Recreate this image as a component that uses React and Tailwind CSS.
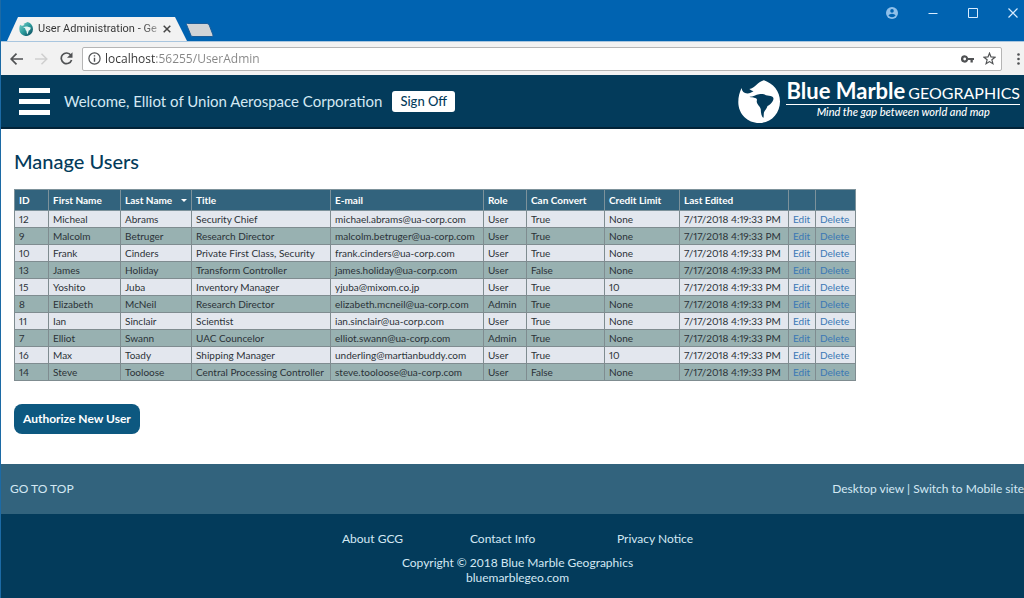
import { useState } from 'react';

const COLUMNS = [
  { label: 'ID', width: 'w-[34px]' },
  { label: 'First Name', width: 'w-[72px]' },
  { label: 'Last Name', width: 'w-[71px]', sorted: true },
  { label: 'Title', width: 'w-[139px]' },
  { label: 'E-mail', width: 'w-[153px]' },
  { label: 'Role', width: 'w-[43px]' },
  { label: 'Can Convert', width: 'w-[78px]' },
  { label: 'Credit Limit', width: 'w-[75px]' },
  { label: 'Last Edited', width: 'w-[109px]' },
  { label: '', width: 'w-[27px]' },
  { label: '', width: 'w-[40px]' },
];

const EDITED = '7/17/2018 4:19:33 PM';

const USERS = [
  [12, 'Micheal', 'Abrams', 'Security Chief', 'michael.abrams@ua-corp.com', 'User', 'True', 'None', EDITED],
  [9, 'Malcolm', 'Betruger', 'Research Director', 'malcolm.betruger@ua-corp.com', 'User', 'True', 'None', EDITED],
  [10, 'Frank', 'Cinders', 'Private First Class, Security', 'frank.cinders@ua-corp.com', 'User', 'True', 'None', EDITED],
  [13, 'James', 'Holiday', 'Transform Controller', 'james.holiday@ua-corp.com', 'User', 'False', 'None', EDITED],
  [15, 'Yoshito', 'Juba', 'Inventory Manager', 'yjuba@mixom.co.jp', 'User', 'True', '10', EDITED],
  [8, 'Elizabeth', 'McNeil', 'Research Director', 'elizabeth.mcneil@ua-corp.com', 'Admin', 'True', 'None', EDITED],
  [11, 'Ian', 'Sinclair', 'Scientist', 'ian.sinclair@ua-corp.com', 'User', 'True', 'None', EDITED],
  [7, 'Elliot', 'Swann', 'UAC Councelor', 'elliot.swann@ua-corp.com', 'Admin', 'True', 'None', EDITED],
  [16, 'Max', 'Toady', 'Shipping Manager', 'underling@martianbuddy.com', 'User', 'True', '10', EDITED],
  [14, 'Steve', 'Tooloose', 'Central Processing Controller', 'steve.tooloose@ua-corp.com', 'User', 'False', 'None', EDITED],
];

function Logo() {
  return (
    <svg viewBox="0 0 42 43" className="h-[43px] w-[42px]" aria-hidden="true">
      <path
        fill="#ffffff"
        d="M3.500 8C4 11.500 6 13.200 9.300 13.400C11.500 13.500 13.500 12.500 15.500 11.200C13.500 10.500 12.300 9.800 11.300 9C17 8.200 20 1.500 26 0.300C35 3.500 42 11 42 21.500C42 33.500 33 43 21.200 43C9.500 43 0.300 34 0.300 22C0.300 17 1.500 12.500 3.500 8Z"
      />
      <path
        fill="#033b5b"
        d="M11.500 16.800C15 16.500 18 14.800 21 14.200C24 13.800 26 14 28 15.200C30 15.700 32 15.600 34 16.600C36 17.800 35.800 19.500 34.500 21.500C33 24 31.500 25 29.500 26C28.500 29 27 30 26 32.200C25.500 34 26 36.500 25.300 38C23.500 36.500 22.800 33 22.800 29.500C22.500 26.500 19 25 18.700 21.500C19 19.500 19.500 18.500 17 17.900C15 17.500 13 17.500 11.500 16.800Z"
      />
    </svg>
  );
}

function Favicon() {
  return (
    <svg viewBox="0 0 14 14" className="size-3.5 shrink-0" aria-hidden="true">
      <defs>
        <linearGradient id="marble" x1="0" y1="0" x2="1" y2="1">
          <stop offset="0" stopColor="#7fd6cf" />
          <stop offset="0.5" stopColor="#2a9a9b" />
          <stop offset="1" stopColor="#0a4258" />
        </linearGradient>
      </defs>
      <path d="M1.200 2.800C2.500 4.400 4.200 4 5.600 2.600L4.300 2C6 1.700 7 0.500 8.700 0.100C12 1.200 14 4 14 7.200A6.800 6.800 0 0 1 0.300 7.200C0.300 5.500 0.500 4 1.200 2.800Z" fill="url(#marble)" />
      <path d="M4 5.300C6 5 7.200 4.300 9 4.700L11.600 5.400C12 6.800 10.800 8 9.800 8.600L8.600 12.200C7.600 11.300 7.600 9.800 7.500 9C6.200 8 6.400 6.300 5.900 5.900Z" fill="#e4f5f4" />
    </svg>
  );
}

function TitleBar() {
  return (
    <div className="flex h-[42px] items-end justify-between border-b border-[#a9c6df] bg-[#0063b1] pl-1.5">
      <div className="flex items-end">
        <div className="flex h-6 w-[180px] items-center bg-[#f2f2f2] pr-4 pl-3 [clip-path:polygon(0_100%,11px_0,168px_0,100%_100%)]">
          <Favicon />
          <span className="ml-[5px] flex-1 bg-linear-to-r from-[#333] from-85% to-[#bbb] bg-clip-text font-[Roboto,sans-serif] text-[11px] leading-4 whitespace-nowrap text-transparent">
            User Administration - Ge
          </span>
          <button type="button" aria-label="Close tab" className="ml-[3px] shrink-0 text-[#444]">
            <svg viewBox="0 0 8 8" className="size-2" fill="none" stroke="currentColor" strokeWidth="1.5">
              <path d="M0.700 0.700L7.300 7.300M7.300 0.700L0.700 7.300" />
            </svg>
          </button>
        </div>
        <button type="button" aria-label="New tab" className="mb-[3px] -ml-0.5">
          <svg viewBox="0 0 30 15" className="h-[15px] w-[30px]">
            <path d="M1.500 1.500Q1 0.500 2.500 0.500H22Q23.500 0.500 24.200 2L28 12Q28.500 13.500 27 13.500H8Q6.500 13.500 6 12.500Z" fill="#d0d3d6" stroke="#1b5c98" strokeWidth="1" />
          </svg>
        </button>
      </div>
      <div className="flex items-center gap-[30px] self-start pt-[7px] pr-1.5 text-[#d8ecff]">
        <button type="button" aria-label="Profile">
          <svg viewBox="0 0 12 12" className="size-3">
            <circle cx="6" cy="6" r="6" fill="#8fc0ea" />
            <circle cx="6" cy="3.900" r="1.800" fill="#0063b1" />
            <path d="M2.400 8.200Q3.700 6.700 6 6.700T9.600 8.200Q8.400 10.200 6 10.200T2.400 8.200Z" fill="#0063b1" />
          </svg>
        </button>
        <button type="button" aria-label="Minimize">
          <svg viewBox="0 0 10 10" className="size-2.5" fill="none" stroke="currentColor">
            <path d="M0.500 5.500H9.500" />
          </svg>
        </button>
        <button type="button" aria-label="Maximize">
          <svg viewBox="0 0 10 10" className="size-2.5" fill="none" stroke="currentColor">
            <path d="M0.500 0.500H9.500V9.500H0.500Z" />
          </svg>
        </button>
        <button type="button" aria-label="Close">
          <svg viewBox="0 0 10 10" className="size-2.5" fill="none" stroke="currentColor" strokeWidth="1.200">
            <path d="M0.500 0.500L9.500 9.500M9.500 0.500L0.500 9.500" />
          </svg>
        </button>
      </div>
    </div>
  );
}

function Toolbar() {
  const [url, setUrl] = useState('localhost:56255/UserAdmin');

  return (
    <div className="flex h-[33px] items-center bg-[#f2f2f2] pl-[9px] text-[#505254]">
      <button type="button" aria-label="Back">
        <svg viewBox="0 0 13 12" className="h-3 w-[13px]" fill="none" stroke="currentColor" strokeWidth="1.700">
          <path d="M13 6H1.500M6.500 0.700L1.200 6L6.500 11.300" />
        </svg>
      </button>
      <button type="button" aria-label="Forward" className="ml-3 text-[#cfcfcf]">
        <svg viewBox="0 0 13 12" className="h-3 w-[13px]" fill="none" stroke="currentColor" strokeWidth="1.500">
          <path d="M0 6H11.500M6.500 0.700L11.800 6L6.500 11.300" />
        </svg>
      </button>
      <button type="button" aria-label="Reload" className="ml-3">
        <svg viewBox="0 0 13 13" className="size-[13px]" fill="none" stroke="currentColor" strokeWidth="1.700">
          <path d="M10.800 3.100A5.300 5.300 0 1 0 11.600 8" />
          <path d="M12.500 0.300V5.800H7Z" fill="currentColor" stroke="none" />
        </svg>
      </button>
      <div className="ml-[9px] flex h-6 min-w-0 flex-1 items-center rounded-xs border border-[#b5b5b5] bg-white px-[5px]">
        <button type="button" aria-label="View site information">
          <svg viewBox="0 0 13 13" className="size-[13px]" fill="none" stroke="currentColor" strokeWidth="1.200">
            <circle cx="6.500" cy="6.500" r="5.600" />
            <path d="M6.500 5.700V9.800M6.500 3.200V4.600" strokeWidth="1.400" />
          </svg>
        </button>
        <input
          type="text"
          aria-label="Address"
          value={url}
          onChange={(e) => setUrl(e.target.value)}
          className="ml-1 min-w-0 flex-1 bg-[linear-gradient(90deg,#333_50px,#858585_50px)] bg-clip-text font-['Open_Sans',sans-serif] text-[12px] leading-5 text-transparent caret-black outline-none"
        />
        <button type="button" aria-label="Saved password">
          <svg viewBox="0 0 13 8" className="h-2 w-[13px]">
            <path fillRule="evenodd" fill="currentColor" d="M3.700 0.300A3.700 3.700 0 1 0 7.200 5.100H9.500V7.400H11.800V5.100H13V2.900H7.200A3.700 3.700 0 0 0 3.700 0.300ZM3.700 2.600A1.400 1.400 0 1 1 3.700 5.400A1.400 1.400 0 1 1 3.700 2.600Z" />
          </svg>
        </button>
        <button type="button" aria-label="Bookmark" className="ml-[9px]">
          <svg viewBox="0 0 13 13" className="size-[13px]" fill="none" stroke="currentColor" strokeWidth="1.200">
            <path d="M6.500 1.200L8 4.900L12 5.200L8.900 7.800L9.900 11.700L6.500 9.600L3.100 11.700L4.100 7.800L1 5.200L5 4.900Z" />
          </svg>
        </button>
      </div>
      <button type="button" aria-label="Browser menu" className="mr-1 ml-[15px]">
        <svg viewBox="0 0 3 12" className="h-3 w-[3px]" fill="currentColor">
          <circle cx="1.500" cy="1.500" r="1.300" />
          <circle cx="1.500" cy="6" r="1.300" />
          <circle cx="1.500" cy="10.500" r="1.300" />
        </svg>
      </button>
    </div>
  );
}

function SiteHeader() {
  return (
    <header className="flex h-[54px] items-center border-b-2 border-[#022338] bg-[#033b5b] pr-1 pl-[18px]">
      <button type="button" aria-label="Menu" className="flex w-[31px] flex-col gap-[6px]">
        <span className="h-[5px] w-full bg-white" />
        <span className="h-[5px] w-full bg-white" />
        <span className="h-[5px] w-full bg-white" />
      </button>
      <p className="ml-[14px] text-[15px] whitespace-nowrap text-[#d3e8f3]">Welcome, Elliot of Union Aerospace Corporation</p>
      <button type="button" className="ml-2.5 h-[21px] rounded-[3px] bg-white px-2 text-[13px] leading-5 font-medium whitespace-nowrap text-[#033b5b]">
        Sign Off
      </button>
      <a href="#home" className="ml-auto flex items-center text-white">
        <Logo />
        <span className="ml-[6px] flex flex-col pb-1">
          <span className="flex items-baseline gap-[3px] border-b border-white leading-[22px]">
            <span className="text-[22px] font-bold whitespace-nowrap">Blue Marble</span>
            <span className="text-[16px]">GEOGRAPHICS</span>
          </span>
          <span className="text-center text-[11px] leading-[14px] font-medium whitespace-nowrap italic">Mind the gap between world and map</span>
        </span>
      </a>
    </header>
  );
}

function UserTable() {
  return (
    <table className="border-collapse text-[10px] leading-4 whitespace-nowrap text-[#2b3238] proportional-nums">
      <colgroup>
        {COLUMNS.map((c, i) => <col key={i} className={c.width} />)}
      </colgroup>
      <thead>
        <tr className="h-[21px] bg-[#32637d] text-left text-white">
          {COLUMNS.map((c, i) => (
            <th key={i} className="border border-[#7d929b] px-1 py-0 font-bold">
              {c.sorted ? (
                <button type="button" className="flex w-full items-center justify-between gap-1">
                  {c.label}
                  <svg viewBox="0 0 6 3" className="h-[3px] w-[6px]" fill="currentColor">
                    <path d="M0 0H6L3 3Z" />
                  </svg>
                </button>
              ) : c.label}
            </th>
          ))}
        </tr>
      </thead>
      <tbody>
        {USERS.map((user) => (
          <tr key={user[0]} className="bg-[#e3e7ee] even:bg-[#98b1b1]">
            {user.map((value, i) => <td key={i} className="border border-[#7f8c90] px-1 py-0">{value}</td>)}
            <td className="border border-[#7f8c90] px-1 py-0"><a href="#edit" className="text-[#3a78b5]">Edit</a></td>
            <td className="border border-[#7f8c90] px-1 py-0"><a href="#delete" className="text-[#3a78b5]">Delete</a></td>
          </tr>
        ))}
      </tbody>
    </table>
  );
}

function SiteFooter() {
  return (
    <footer className="flex flex-1 flex-col text-[12px] text-[#d3e8f3]">
      <div className="flex h-[50px] items-center justify-between bg-[#32637d] pl-[9px]">
        <a href="#top">GO TO TOP</a>
        <span>Desktop view | <a href="#mobile">Switch to Mobile site</a></span>
      </div>
      <div className="flex-1 bg-[#033b5b] pt-4 pb-3 pl-2.5 text-center leading-[15px]">
        <nav className="grid grid-cols-[128px_147px_auto] justify-center text-left leading-[18px]">
          <a href="#about">About GCG</a>
          <a href="#contact">Contact Info</a>
          <a href="#privacy">Privacy Notice</a>
        </nav>
        <p className="mt-[7px]">Copyright © 2018 Blue Marble Geographics</p>
        <a href="#site">bluemarblegeo.com</a>
      </div>
    </footer>
  );
}

export default function App() {
  return (
    <div className="flex min-h-screen flex-col border-l border-[#1c6aa5] bg-white font-[Lato,sans-serif]">
      <TitleBar />
      <Toolbar />
      <SiteHeader />
      <main className="px-[13px] pt-5 pb-[30px]">
        <h1 className="mb-4 text-[20px] leading-6 font-medium text-[#033b5b]">Manage Users</h1>
        <UserTable />
        <button type="button" className="mt-[23px] h-[30px] rounded-lg bg-[#0d5880] px-[9px] text-[12px] font-bold text-white">
          Authorize New User
        </button>
      </main>
      <SiteFooter />
    </div>
  );
}
